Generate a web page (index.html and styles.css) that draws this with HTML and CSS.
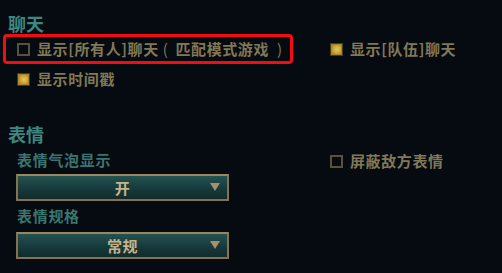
FILE: index.html
```html
<!DOCTYPE html>
<html lang="zh-CN">
<head>
<meta charset="utf-8">
<link rel="stylesheet" href="styles.css">
</head>
<body>
<div class="page">
  <h2 class="heading">聊天</h2>
  <div class="row">
    <div class="left">
      <div class="highlight">
        <label class="check"><span class="box"></span><span class="txt">显示[所有人]聊天<span class="paren">(</span> 匹配模式游戏 <span class="paren">)</span></span></label>
      </div>
    </div>
    <div class="right">
      <label class="check"><span class="box on"></span><span class="txt">显示[队伍]聊天</span></label>
    </div>
  </div>
  <div class="row row2">
    <div class="left pad">
      <label class="check"><span class="box on"></span><span class="txt">显示时间戳</span></label>
    </div>
  </div>

  <h2 class="heading heading2">表情</h2>
  <div class="row">
    <div class="left col">
      <div class="label">表情气泡显示</div>
      <div class="select"><span class="value">开</span><span class="arrow"></span></div>
      <div class="label label2">表情规格</div>
      <div class="select"><span class="value">常规</span><span class="arrow"></span></div>
    </div>
    <div class="right rtop">
      <label class="check"><span class="box"></span><span class="txt">屏蔽敌方表情</span></label>
    </div>
  </div>
</div>
</body>
</html>
```
FILE: styles.css
```css
html, body {
  margin: 0;
  padding: 0;
  background: #050b10;
}
body {
  width: 502px;
  height: 273px;
  overflow: hidden;
  font-family: "Noto Sans CJK SC", "Noto Sans", sans-serif;
  font-weight: 700;
}
.page {
  padding-top: 12px;
}
.heading {
  margin: 0 0 0 8px;
  height: 22px;
  line-height: 22px;
  font-size: 18px;
  font-weight: 700;
  color: #3d8682;
}
.heading2 {
  margin-top: 29px;
}
.row {
  display: flex;
  align-items: flex-start;
}
.left {
  width: 330px;
  flex: none;
}
.highlight {
  margin-left: 3px;
  width: 290px;
  height: 30px;
  box-sizing: border-box;
  border: 3px solid #f20d12;
  border-radius: 4px;
  padding-left: 11px;
  display: flex;
  align-items: center;
}
.right {
  height: 30px;
  display: flex;
  align-items: center;
}
.row2 .left {
  height: 30px;
  display: flex;
  align-items: center;
}
.pad {
  padding-left: 17px;
  box-sizing: border-box;
}
.check {
  display: flex;
  align-items: center;
  gap: 7px;
}
.box {
  width: 13px;
  height: 13px;
  box-sizing: border-box;
  border: 2px solid #57513e;
  flex: none;
}
.box.on {
  border: 1px solid #4a3c14;
  background: radial-gradient(circle at 55% 50%, #e6c85a 0%, #cba73c 45%, #8c6c1e 100%);
  box-shadow: inset 0 0 0 1px #a78628;
}
.txt {
  font-size: 15px;
  line-height: 20px;
  letter-spacing: 0.6px;
  color: #817857;
  white-space: nowrap;
}
.paren {
  font-weight: 400;
  margin: 0 3px 0 4px;
}
.col {
  padding-left: 16px;
  box-sizing: border-box;
  padding-top: 3px;
}
.label {
  height: 24px;
  line-height: 24px;
  font-size: 15px;
  letter-spacing: 0.7px;
  color: #3b7571;
  padding-left: 1px;
  margin-bottom: 2px;
}
.label2 {
  margin-top: 3px;
  margin-bottom: 4px;
}
.select {
  position: relative;
  width: 213px;
  height: 27px;
  box-sizing: border-box;
  border: 2px solid #86724d;
  border-top-color: #9a8660;
  background: linear-gradient(#24524f, #16383a 60%, #112c2d);
  display: flex;
  align-items: center;
  justify-content: center;
}
.value {
  font-size: 15px;
  line-height: 20px;
  color: #c7b48c;
  letter-spacing: 0.5px;
}
.arrow {
  position: absolute;
  right: 7px;
  top: 7px;
  width: 0;
  height: 0;
  border-left: 5px solid transparent;
  border-right: 5px solid transparent;
  border-top: 8px solid #a68f6c;
}
.rtop {
  margin-top: 1px;
}
```
